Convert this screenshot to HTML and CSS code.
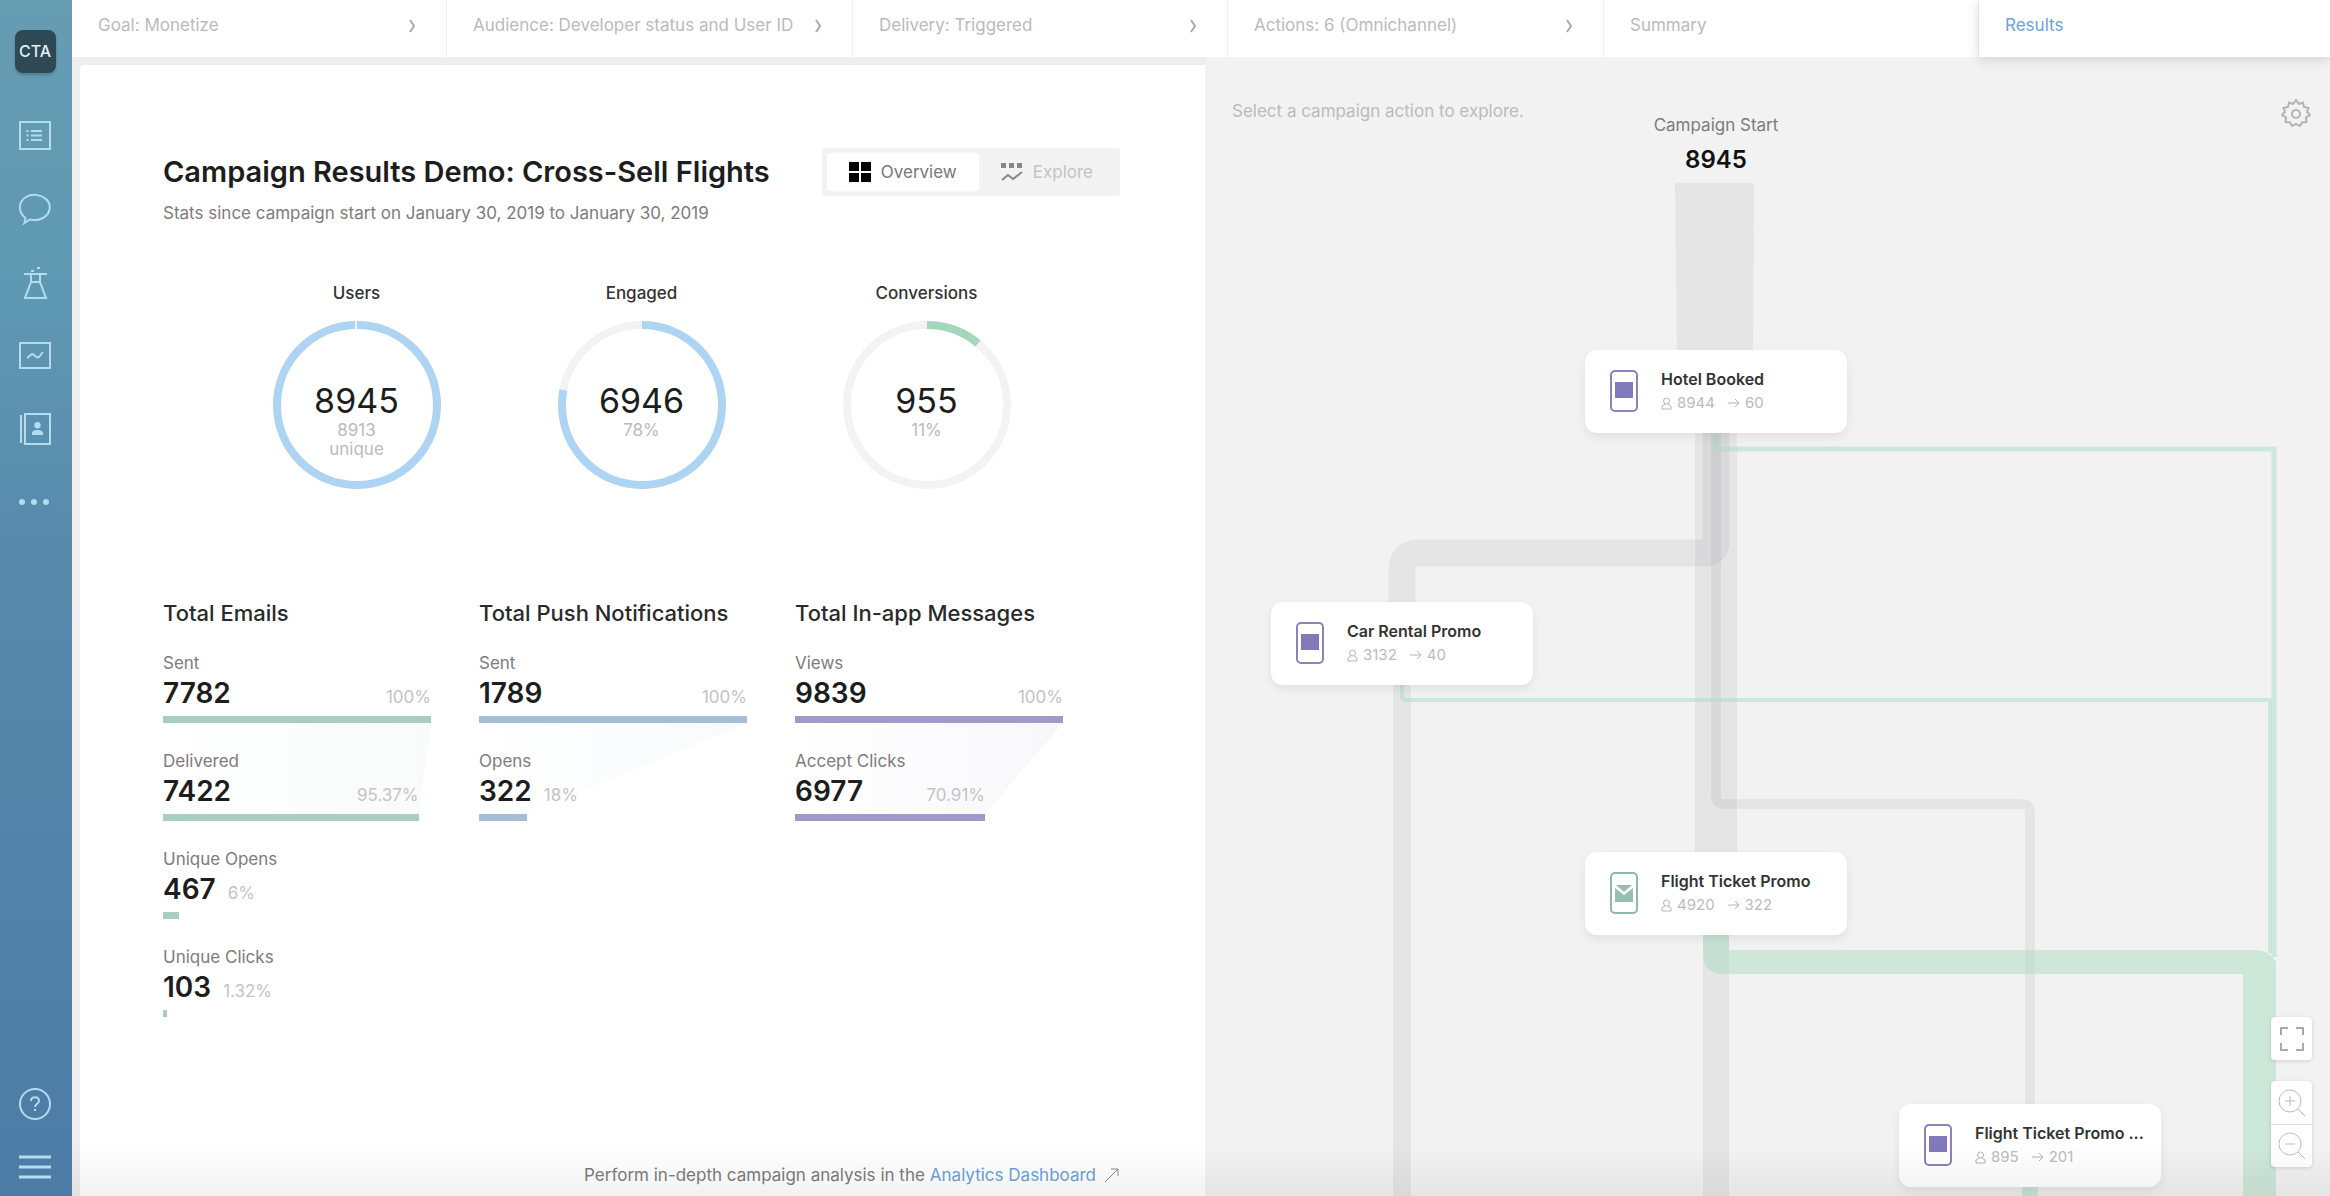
FILE: index.html
```html
<!DOCTYPE html>
<html lang="en">
<head>
    <meta charset="UTF-8">
    <meta name="viewport" content="width=device-width, initial-scale=1.0">
    <title>Campaign Results</title>
    <link rel="stylesheet" href="styles.css">
</head>
<body>
<div class="app">
    <!-- Left navigation -->
    <nav class="sidebar">
        <a class="logo" href="#">CTA</a>
        <div class="nav-links">
            <a href="#" aria-label="Campaigns">
                <svg width="34" height="34" viewBox="0 0 34 34"><rect x="2" y="3" width="30" height="27"/><path d="M13 12h11M13 16.500h11M13 21h11M8.500 12h2M8.500 16.500h2M8.500 21h2"/></svg>
            </a>
            <a href="#" aria-label="Messages">
                <svg width="34" height="34" viewBox="0 0 34 34"><path d="M7 25.500C0 20 0 10 8 5c7-4 16-2 21 3 5 6 3 14-4 18-4 2-9 2.500-13 1.500L6.500 31c1-2 1.300-3.500.5-5.500z"/></svg>
            </a>
            <a href="#" aria-label="Experiments">
                <svg width="34" height="34" viewBox="0 0 34 34"><path d="M6 9h23M13 9v8L7 33h21l-6-16V9M13 17h9M13 6h3M19 3h3"/></svg>
            </a>
            <a href="#" aria-label="Analytics">
                <svg width="34" height="34" viewBox="0 0 34 34"><rect x="2" y="5" width="30" height="25"/><path d="M9 20l5-4c3 0 4 5 7 3l4-5"/></svg>
            </a>
            <a href="#" aria-label="Users">
                <svg width="34" height="34" viewBox="0 0 34 34"><rect x="7" y="3" width="25" height="30"/><path d="M3 4v28"/><path class="solid" d="M14 24v-2c0-4 11-4 11 0v2zM19.500 11a3.200 3.200 0 1 1 0 6.400 3.200 3.200 0 0 1 0-6.400z"/></svg>
            </a>
            <a href="#" aria-label="More">
                <svg width="34" height="34" viewBox="0 0 34 34"><g class="solid"><circle cx="4" cy="18" r="3"/><circle cx="16" cy="18" r="3"/><circle cx="28" cy="18" r="3"/></g></svg>
            </a>
        </div>
        <div class="nav-bottom">
            <a href="#" aria-label="Help">
                <svg width="34" height="34" viewBox="0 0 34 34"><circle cx="17" cy="17" r="15"/><path d="M13 14c0-5 8-5 8 0 0 3-4 2.500-4 6M17 22v2"/></svg>
            </a>
            <a href="#" aria-label="Menu">
                <svg width="34" height="34" viewBox="0 0 34 34"><path class="thick" d="M1 7h32M1 17h32M1 27h32"/></svg>
            </a>
        </div>
    </nav>

    <div class="content">
        <!-- Campaign steps -->
        <div class="steps">
            <a class="step" href="#">Goal: Monetize <svg width="8" height="14" viewBox="0 0 8 14"><path d="M2 1l4 6-4 6"/></svg></a>
            <a class="step" href="#">Audience: Developer status and User ID <svg width="8" height="14" viewBox="0 0 8 14"><path d="M2 1l4 6-4 6"/></svg></a>
            <a class="step" href="#">Delivery: Triggered <svg width="8" height="14" viewBox="0 0 8 14"><path d="M2 1l4 6-4 6"/></svg></a>
            <a class="step" href="#">Actions: 6 (Omnichannel) <svg width="8" height="14" viewBox="0 0 8 14"><path d="M2 1l4 6-4 6"/></svg></a>
            <a class="step" href="#">Summary</a>
            <a class="step active" href="#">Results</a>
        </div>

        <main class="main">
            <section class="panel">
                <div class="panel-head">
                    <h1>Campaign Results Demo: Cross-Sell Flights</h1>
                    <div class="toggle">
                        <button class="selected" type="button">
                            <svg width="22" height="20" viewBox="0 0 22 20"><path d="M0 0h10v9H0zM12 0h10v9H12zM0 11h10v9H0zM12 11h10v9H12z"/></svg>
                            Overview
                        </button>
                        <button type="button">
                            <svg width="22" height="20" viewBox="0 0 22 20"><path d="M0 1h5v5H0zM8 1h5v5H8zM16 1h5v5h-5z"/><path class="line" d="M1 18l6-5 5 4 9-7"/></svg>
                            Explore
                        </button>
                    </div>
                </div>
                <p class="subtitle">Stats since campaign start on January 30, 2019 to January 30, 2019</p>

                <div class="rings">
                    <div class="ring-card">
                        <h2>Users</h2>
                        <div class="ring">
                            <svg viewBox="0 0 168 168"><circle cx="84" cy="84" r="80"/><circle class="arc-blue" cx="84" cy="84" r="80" pathLength="100" stroke-dasharray="99.600 100"/></svg>
                            <strong>8945</strong>
                            <span>8913</span>
                            <span>unique</span>
                        </div>
                    </div>
                    <div class="ring-card">
                        <h2>Engaged</h2>
                        <div class="ring">
                            <svg viewBox="0 0 168 168"><circle cx="84" cy="84" r="80"/><circle class="arc-blue" cx="84" cy="84" r="80" pathLength="100" stroke-dasharray="78 100"/></svg>
                            <strong>6946</strong>
                            <span>78%</span>
                        </div>
                    </div>
                    <div class="ring-card">
                        <h2>Conversions</h2>
                        <div class="ring">
                            <svg viewBox="0 0 168 168"><circle cx="84" cy="84" r="80"/><circle class="arc-green" cx="84" cy="84" r="80" pathLength="100" stroke-dasharray="11 100"/></svg>
                            <strong>955</strong>
                            <span>11%</span>
                        </div>
                    </div>
                </div>

                <div class="totals">
                    <div class="total emails">
                        <h3>Total Emails</h3>
                        <div class="stat" style="--w: 100%; --next: 95.37%">
                            <div class="label">Sent</div>
                            <div class="value-row"><b>7782</b><span>100%</span></div>
                            <div class="bar"></div>
                        </div>
                        <div class="stat" style="--w: 95.37%">
                            <div class="label">Delivered</div>
                            <div class="value-row"><b>7422</b><span>95.37%</span></div>
                            <div class="bar"></div>
                        </div>
                        <div class="stat" style="--w: 6%">
                            <div class="label">Unique Opens</div>
                            <div class="value-row"><b>467</b><span>6%</span></div>
                            <div class="bar"></div>
                        </div>
                        <div class="stat" style="--w: 1.32%">
                            <div class="label">Unique Clicks</div>
                            <div class="value-row"><b>103</b><span>1.32%</span></div>
                            <div class="bar"></div>
                        </div>
                    </div>
                    <div class="total push">
                        <h3>Total Push Notifications</h3>
                        <div class="stat" style="--w: 100%; --next: 18%">
                            <div class="label">Sent</div>
                            <div class="value-row"><b>1789</b><span>100%</span></div>
                            <div class="bar"></div>
                        </div>
                        <div class="stat" style="--w: 18%">
                            <div class="label">Opens</div>
                            <div class="value-row"><b>322</b><span>18%</span></div>
                            <div class="bar"></div>
                        </div>
                    </div>
                    <div class="total inapp">
                        <h3>Total In-app Messages</h3>
                        <div class="stat" style="--w: 100%; --next: 70.91%">
                            <div class="label">Views</div>
                            <div class="value-row"><b>9839</b><span>100%</span></div>
                            <div class="bar"></div>
                        </div>
                        <div class="stat" style="--w: 70.91%">
                            <div class="label">Accept Clicks</div>
                            <div class="value-row"><b>6977</b><span>70.91%</span></div>
                            <div class="bar"></div>
                        </div>
                    </div>
                </div>

                <p class="panel-foot">Perform in-depth campaign analysis in the <a href="#">Analytics Dashboard <svg width="16" height="16" viewBox="0 0 16 16"><path d="M1 15L14 2M7 2h7v7"/></svg></a></p>
            </section>

            <!-- Campaign flow diagram -->
            <section class="flow">
                <svg class="links" width="100%" height="100%">
                    <g class="gray">
                        <path d="M470 126h79l-1 170h-76z"/>
                        <path d="M490 370h42v430h-42z"/>
                        <path d="M188 620h18v600h-18z"/>
                        <path d="M498 870h26v350h-26z"/>
                    </g>
                    <g class="gray-line">
                        <path stroke-width="27" d="M511 370V484Q511 496 499 496H214Q197 496 197 512V550"/>
                        <path stroke-width="10" d="M511 370V739Q511 747 519 747H817Q825 747 825 755V1055"/>
                    </g>
                    <g class="green-line">
                        <path stroke-width="5" d="M511 370V388Q511 392 515 392H1069V900"/>
                        <path stroke-width="4" d="M197 620V639Q197 643 201 643H1065V896"/>
                        <path stroke-width="16" d="M825 1120v100"/>
                    </g>
                    <path class="green" d="M498 870V896Q498 917 518 917H1038V1220H1071V905Q1064 893 1050 893H524V870z"/>
                </svg>

                <p class="hint">Select a campaign action to explore.</p>
                <button class="settings" type="button" aria-label="Settings">
                    <svg width="30" height="30" viewBox="0 0 30 30"><circle cx="15" cy="15" r="4"/><path d="M15 1l3 4 4-1.500 1 4.500 4.500 1-1.500 4 3 3-4 2.500.5 4.500-4.500.5L19 27l-4-2-4 2-2-3.500-4.500-.5.500-4.500-4-2.500 3-3-1.500-4L7 8l1-4.500L12 5z"/></svg>
                </button>
                <div class="start">
                    <div>Campaign Start</div>
                    <b>8945</b>
                </div>

                <a class="node node-hotel" href="#">
                    <svg class="phone" width="30" height="42" viewBox="0 0 30 42"><rect x="2" y="1" width="26" height="40" rx="4"/><path d="M6 12h18v16H6z"/></svg>
                    <span class="node-text">
                        <b>Hotel Booked</b>
                        <span class="node-stats">
                            <svg width="11" height="13" viewBox="0 0 11 13"><circle cx="5.500" cy="4" r="3"/><path d="M4 7L1 9v3h9V9L7 7"/></svg>8944
                            <svg class="arrow" width="12" height="10" viewBox="0 0 12 10"><path d="M0 5h11M7 1l4 4-4 4"/></svg>60
                        </span>
                    </span>
                </a>
                <a class="node node-car" href="#">
                    <svg class="phone" width="30" height="42" viewBox="0 0 30 42"><rect x="2" y="1" width="26" height="40" rx="4"/><path d="M6 12h18v16H6z"/></svg>
                    <span class="node-text">
                        <b>Car Rental Promo</b>
                        <span class="node-stats">
                            <svg width="11" height="13" viewBox="0 0 11 13"><circle cx="5.500" cy="4" r="3"/><path d="M4 7L1 9v3h9V9L7 7"/></svg>3132
                            <svg class="arrow" width="12" height="10" viewBox="0 0 12 10"><path d="M0 5h11M7 1l4 4-4 4"/></svg>40
                        </span>
                    </span>
                </a>
                <a class="node node-flight" href="#">
                    <svg class="phone mail" width="30" height="42" viewBox="0 0 30 42"><rect x="2" y="1" width="26" height="40" rx="4"/><path d="M6 16l9 7 9-7v14H6zM7 13h16l-8 7z"/></svg>
                    <span class="node-text">
                        <b>Flight Ticket Promo</b>
                        <span class="node-stats">
                            <svg width="11" height="13" viewBox="0 0 11 13"><circle cx="5.500" cy="4" r="3"/><path d="M4 7L1 9v3h9V9L7 7"/></svg>4920
                            <svg class="arrow" width="12" height="10" viewBox="0 0 12 10"><path d="M0 5h11M7 1l4 4-4 4"/></svg>322
                        </span>
                    </span>
                </a>
                <a class="node node-flight-2" href="#">
                    <svg class="phone" width="30" height="42" viewBox="0 0 30 42"><rect x="2" y="1" width="26" height="40" rx="4"/><path d="M6 12h18v16H6z"/></svg>
                    <span class="node-text">
                        <b>Flight Ticket Promo ...</b>
                        <span class="node-stats">
                            <svg width="11" height="13" viewBox="0 0 11 13"><circle cx="5.500" cy="4" r="3"/><path d="M4 7L1 9v3h9V9L7 7"/></svg>895
                            <svg class="arrow" width="12" height="10" viewBox="0 0 12 10"><path d="M0 5h11M7 1l4 4-4 4"/></svg>201
                        </span>
                    </span>
                </a>

                <div class="controls">
                    <div class="control-group">
                        <button type="button" aria-label="Full screen"><svg width="26" height="26" viewBox="0 0 26 26"><path class="corner" d="M2 9V2h7M17 2h7v7M24 17v7h-7M9 24H2v-7"/></svg></button>
                    </div>
                    <div class="control-group">
                        <button type="button" aria-label="Zoom in"><svg width="28" height="28" viewBox="0 0 28 28"><circle cx="12" cy="12" r="11"/><path d="M20 20l7 7M12 7v10M7 12h10"/></svg></button>
                        <button type="button" aria-label="Zoom out"><svg width="28" height="28" viewBox="0 0 28 28"><circle cx="12" cy="12" r="11"/><path d="M20 20l7 7M7 12h10"/></svg></button>
                    </div>
                </div>
            </section>
        </main>
    </div>
    <div class="bottom-shade"></div>
</div>
</body>
</html>
```
FILE: styles.css
```css
* {
    box-sizing: border-box;
}
body {
    margin: 0;
    font-family: Inter, "Liberation Sans", sans-serif;
    font-size: 17px;
    line-height: 24px;
    color: #7c7c7c;
    background: #eee;
}
h1, h2, h3, p {
    margin: 0;
}
a {
    color: inherit;
    text-decoration: none;
}
button {
    border: 0;
    padding: 0;
    background: none;
    font: inherit;
    color: inherit;
    cursor: pointer;
}
svg {
    display: block;
    flex: none;
    fill: none;
}
.app {
    display: flex;
    height: 100vh;
    overflow: hidden;
}

/* Sidebar */
.sidebar {
    width: 72px;
    flex: none;
    display: flex;
    flex-direction: column;
    align-items: center;
    padding: 30px 2px 12px 0;
    background: linear-gradient(to bottom, #669db3 0, #5f98b2 300px, #588bac 520px, #4c7ba5 100%);
}
.logo {
    width: 41px;
    height: 43px;
    border-radius: 8px;
    background: #2e4854;
    color: #e3eef2;
    font-size: 16px;
    font-weight: 500;
    line-height: 43px;
    text-align: center;
    box-shadow: 0 2px 3px rgba(0, 0, 0, 0.2);
}
.nav-links {
    display: flex;
    flex-direction: column;
    gap: 39px;
    margin-top: 46px;
}
.nav-bottom {
    display: flex;
    flex-direction: column;
    gap: 29px;
    margin-top: auto;
}
.sidebar svg {
    stroke: #b4dcf0;
    stroke-width: 2;
}
.sidebar .solid {
    fill: #b4dcf0;
    stroke: none;
}
.sidebar .thick {
    stroke-width: 3;
}

/* Steps */
.content {
    flex: 1;
    min-width: 0;
    display: flex;
    flex-direction: column;
}
.steps {
    display: grid;
    grid-template-columns: 375fr 406fr 375fr 376fr 375fr 351fr;
    height: 57px;
    flex: none;
    position: relative;
    z-index: 1;
    background: #fff;
}
.step {
    display: flex;
    justify-content: space-between;
    padding: 13px 30px 0 26px;
    border-right: 1px solid #f0f0f0;
    color: #bbb;
    white-space: nowrap;
}
.step svg {
    margin-top: 6px;
    stroke: #aaa;
    stroke-width: 2;
}
.step.active {
    border: 0;
    color: #6ba3dc;
    background: #fff;
    box-shadow: 0 2px 12px rgba(0, 0, 0, 0.15);
}

/* Results panel */
.main {
    flex: 1;
    min-height: 0;
    display: grid;
    grid-template-columns: 1fr 1fr;
    padding-left: 8px;
}
.panel {
    display: flex;
    flex-direction: column;
    margin-top: 8px;
    padding: 83px 85px 9px 83px;
    background: #fff;
    border-radius: 4px 0 0 0;
}
.panel-head {
    display: flex;
    align-items: center;
    justify-content: space-between;
}
h1 {
    font-size: 29px;
    line-height: 40px;
    font-weight: 600;
    color: #1d1d1d;
    white-space: nowrap;
}
.toggle {
    display: flex;
    flex: none;
    padding: 5px;
    background: #f3f3f3;
    border-radius: 3px;
}
.toggle button {
    display: flex;
    align-items: center;
    gap: 10px;
    height: 38px;
    padding: 0 22px;
    border-radius: 3px;
    color: #c4c4c4;
}
.toggle svg {
    fill: #888;
}
.toggle .line {
    fill: none;
    stroke: #888;
    stroke-width: 2;
}
.toggle .selected {
    background: #fff;
    color: #777;
}
.toggle .selected svg {
    fill: #000;
}
.subtitle {
    margin-top: 5px;
}
.rings {
    display: flex;
    justify-content: center;
    gap: 117px;
    margin-top: 56px;
}
h2 {
    font-size: 17px;
    font-weight: 500;
    color: #333;
    text-align: center;
}
.ring {
    position: relative;
    display: flex;
    flex-direction: column;
    align-items: center;
    width: 168px;
    height: 168px;
    margin-top: 16px;
    padding-top: 60px;
    color: #bbb;
}
.ring span {
    line-height: 19px;
}
.ring strong {
    font-size: 34px;
    line-height: 40px;
    font-weight: 400;
    color: #1d1d1d;
}
.ring svg {
    position: absolute;
    inset: 0;
    transform: rotate(-90deg);
    stroke: #f3f3f6;
    stroke-width: 8;
}
.arc-blue {
    stroke: #aed4f4;
}
.arc-green {
    stroke: #a4d6bb;
}

/* Totals */
.totals {
    position: relative;
    z-index: 0;
    display: grid;
    grid-template-columns: repeat(3, 268px);
    gap: 48px;
    margin-top: 108px;
}
.emails {
    --color: #a8cdc3;
}
.push {
    --color: #a6bdd6;
}
.inapp {
    --color: #a09ac9;
}
h3 {
    margin-bottom: 22px;
    font-size: 22px;
    line-height: 32px;
    font-weight: 500;
    color: #2a2a2a;
    white-space: nowrap;
}
.stat {
    position: relative;
    margin-bottom: 26px;
}
/* faint funnel that joins a bar to the next one */
.stat[style*="--next"]::after {
    content: "";
    position: absolute;
    z-index: -1;
    top: 100%;
    left: 0;
    width: 100%;
    height: 91px;
    background: linear-gradient(to right, transparent, var(--color));
    opacity: 0.08;
    clip-path: polygon(0 0, 100% 0, var(--next) 100%, 0 100%);
}
.value-row {
    display: flex;
    align-items: baseline;
    justify-content: space-between;
    gap: 12px;
    width: var(--w);
    min-width: max-content;
    height: 32px;
    margin-top: 2px;
    line-height: 32px;
    color: #c4c4c4;
}
.value-row b {
    font-size: 28px;
    font-weight: 600;
    color: #1d1d1d;
}
.value-row span {
    line-height: 24px;
}
.bar {
    width: var(--w);
    height: 7px;
    margin-top: 7px;
    background: var(--color);
}
.panel-foot {
    display: flex;
    justify-content: flex-end;
    margin-top: auto;
    gap: 5px;
}
.panel-foot a {
    display: flex;
    align-items: center;
    gap: 8px;
    color: #6ba3dc;
}
.panel-foot svg {
    stroke: #888;
    stroke-width: 1;
}

/* Flow */
.flow {
    position: relative;
    overflow: hidden;
    background: #f2f2f2;
}
.links {
    position: absolute;
    inset: 0;
}
.gray {
    fill: rgba(40, 40, 50, 0.06);
}
.gray-line {
    stroke: rgba(40, 40, 50, 0.06);
}
.green-line {
    stroke: rgba(168, 220, 196, 0.5);
}
.green {
    fill: rgba(168, 220, 192, 0.5);
}
.hint {
    position: absolute;
    top: 42px;
    left: 27px;
    color: #bbb;
}
.settings {
    position: absolute;
    top: 42px;
    right: 19px;
}
.settings svg {
    stroke: #b4b4b4;
    stroke-width: 2;
}
.start {
    position: absolute;
    top: 56px;
    left: 411px;
    width: 200px;
    text-align: center;
}
.start b {
    display: block;
    margin-top: 7px;
    line-height: 32px;
    font-size: 24px;
    font-weight: 600;
    color: #111;
}
.node {
    position: absolute;
    display: flex;
    align-items: center;
    gap: 22px;
    width: 262px;
    height: 83px;
    padding: 0 0 1px 24px;
    background: #fff;
    border-radius: 12px;
    box-shadow: 0 4px 10px rgba(0, 0, 0, 0.07);
}
.node-hotel {
    top: 293px;
    left: 380px;
}
.node-car {
    top: 545px;
    left: 66px;
}
.node-flight {
    top: 795px;
    left: 380px;
}
.node-flight-2 {
    top: 1047px;
    left: 694px;
}
.phone rect {
    stroke: #8a82b9;
    stroke-width: 2;
}
.phone path {
    fill: #8279ba;
}
.mail rect {
    stroke: #8fb9ac;
}
.mail path {
    fill: #96beb3;
}
.node-text b {
    display: block;
    font-size: 16px;
    font-weight: 600;
    color: #333;
}
.node-stats {
    display: flex;
    align-items: center;
    gap: 5px;
    font-size: 15px;
    color: #bbb;
}
.node-stats svg {
    stroke: #b4b4b4;
}
.node-stats .arrow {
    margin-left: 8px;
}
.controls {
    position: absolute;
    right: 18px;
    bottom: 29px;
    display: flex;
    flex-direction: column;
    gap: 21px;
}
.control-group {
    background: #fff;
    border-radius: 4px;
    box-shadow: 0 1px 4px rgba(0, 0, 0, 0.14);
}
.control-group button {
    display: flex;
    align-items: center;
    justify-content: center;
    width: 41px;
    height: 43px;
}
.control-group button + button {
    border-top: 1px solid #ddd;
}
.control-group svg {
    stroke: #bbb;
    stroke-width: 1;
}
.control-group .corner {
    stroke: #aaa;
    stroke-width: 2;
}
.bottom-shade {
    position: fixed;
    z-index: 2;
    left: 72px;
    right: 0;
    bottom: 0;
    height: 50px;
    background: linear-gradient(to bottom, transparent, rgba(0, 0, 0, 0.05));
    pointer-events: none;
}
```
